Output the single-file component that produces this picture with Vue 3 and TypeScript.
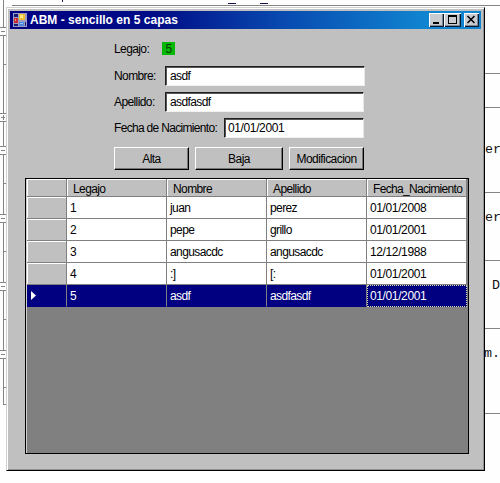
<script setup lang="ts">
import { ref } from 'vue'

interface Persona {
  legajo: number
  nombre: string
  apellido: string
  fecha: string
}

const personas: Persona[] = [
  { legajo: 1, nombre: 'juan', apellido: 'perez', fecha: '01/01/2008' },
  { legajo: 2, nombre: 'pepe', apellido: 'grillo', fecha: '01/01/2001' },
  { legajo: 3, nombre: 'angusacdc', apellido: 'angusacdc', fecha: '12/12/1988' },
  { legajo: 4, nombre: ':]', apellido: '[:', fecha: '01/01/2001' },
  { legajo: 5, nombre: 'asdf', apellido: 'asdfasdf', fecha: '01/01/2001' },
]
const selected = ref<Persona>(personas[4])

const ruleRows: number[] = [73, 107, 192, 260, 328, 413]
const foldRows: number[] = [27, 113, 146, 214, 282, 350]
const tickRows: number[] = [64, 183, 251, 319, 387, 404]
</script>

<template>
  <main class="desktop">
    <svg class="editor" width="500" height="483" viewBox="0 0 500 483" shape-rendering="crispEdges">
      <path d="M12 5.5H500" class="rule" />
      <path d="M62.5 0V2M228 3.5H236M260 3.5H268" class="mark" />
      <path v-for="y in ruleRows" :key="'r' + y" :d="`M484 ${y + 0.5}H500`" class="rule" />
      <path d="M3.5 0V27M3.5 35V113M3.5 121V146M3.5 154V214M3.5 222V282M3.5 290V350M3.5 358V404" class="rule" />
      <path v-for="y in foldRows" :key="'f' + y" :d="`M0 ${y + 0.5}H6M0 ${y + 8.5}H6M1 ${y + 4.5}H5`" class="rule" />
      <path d="M3.5 115V120" class="rule" />
      <path v-for="y in tickRows" :key="'t' + y" :d="`M3 ${y + 0.5}H6`" class="rule" />
      <text x="485" y="153">er</text>
      <text x="485" y="221">er</text>
      <text x="492" y="289">D</text>
      <text x="484" y="357">m.</text>
    </svg>

    <section class="window">
      <header class="titlebar">
        <svg class="app-icon" width="14" height="14" viewBox="0 0 14 14">
          <path d="M0 0H14V14H0Z" fill="#9a9dc0" />
          <path d="M1 1H5V4H1ZM1 11H5V13H1ZM12 9H13V13H12Z" fill="#181b78" />
          <path d="M1 5H5V10H1Z" fill="#c82832" /><path d="M2 6H3V8H2Z" fill="#ff9188" />
          <path d="M6 1H12V7H6Z" fill="#f2bd32" /><path d="M7 2H10V5H7Z" fill="#ffeb86" />
          <path d="M6 9H11V13H6Z" fill="#4e86dd" /><path d="M7 10H10V11H7Z" fill="#91c7ff" />
        </svg>
        <h1>ABM - sencillo en 5 capas</h1>
        <div class="controls">
          <button aria-label="Minimizar"><svg width="15" height="14" viewBox="0 0 15 14"><path d="M4 9H10V11H4Z" /></svg></button>
          <button class="maximize" aria-label="Maximizar"><svg width="16" height="14" viewBox="0 0 16 14"><path fill-rule="evenodd" d="M4 2H13V11H4ZM5 4V10H12V4Z" /></svg></button>
          <button class="close" aria-label="Cerrar"><svg width="15" height="14" viewBox="0 0 15 14"><path d="M3.5 3L10.5 10M10.5 3L3.5 10" fill="none" stroke="#000" stroke-width="1.6" /></svg></button>
        </div>
      </header>

      <form class="form" @submit.prevent>
        <div class="row legajo"><label>Legajo:</label><output>{{ selected.legajo }}</output></div>
        <div class="row nombre"><label>Nombre:</label><div class="field">{{ selected.nombre }}</div></div>
        <div class="row apellido"><label>Apellido:</label><div class="field">{{ selected.apellido }}</div></div>
        <div class="row fecha"><label>Fecha de Nacimiento:</label><div class="field date">{{ selected.fecha }}</div></div>
        <div class="actions">
          <button type="button">Alta</button>
          <button type="button">Baja</button>
          <button type="button">Modificacion</button>
        </div>
      </form>

      <div class="grid">
        <div class="record head">
          <span class="selector"></span><span>Legajo</span><span>Nombre</span><span>Apellido</span><span class="hdate">Fecha_Nacimiento</span>
        </div>
        <div v-for="p in personas" :key="p.legajo" class="record" :class="{ active: p.legajo === selected.legajo }">
          <span class="selector"><svg v-if="p.legajo === selected.legajo" width="5" height="9" viewBox="0 0 5 9"><path d="M0 0L5 4.5L0 9Z" fill="#fff" /></svg></span>
          <span>{{ p.legajo }}</span><span>{{ p.nombre }}</span><span>{{ p.apellido }}</span><span class="date">{{ p.fecha }}</span>
        </div>
      </div>
    </section>
  </main>
</template>

<style>
body { background: #fff; overflow: hidden; }
</style>

<style scoped>
* { box-sizing: border-box; }
.desktop {
  position: relative; width: 500px; height: 483px; padding: 7px 0 0 6px; background: #fefefe; overflow: hidden;
  font: 12px/14px "Liberation Sans", Arial, sans-serif; letter-spacing: -0.6px; color: #000;
}
.editor { position: absolute; left: 0; top: 0; letter-spacing: 0; }
.editor text { font: 13.3px "Liberation Mono", monospace; fill: #111; }
.rule { fill: none; stroke: #858585; }
.mark { fill: none; stroke: #111150; }
.window {
  position: relative; width: 479px; height: 464px; padding: 2px; background: #c0c0c0;
  border: 1px solid; border-color: #d0d0d0 #000 #000 #d0d0d0;
  box-shadow: inset 1px 1px #fff, inset -1px -1px #929292;
}
.titlebar {
  display: flex; align-items: center; height: 18px; margin: 1px 0 0 1px; width: 471px; padding: 0 2px 0 3px;
  background: linear-gradient(90deg, #000080 0%, #000d87 31%, #084ab0 58%, #1084d0 88%, #1084d0 100%);
}
.app-icon { flex: none; }
h1 { margin: 0 0 0 3px; color: #fff; font-size: 12px; line-height: 18px; font-weight: 700; letter-spacing: 0.02px; white-space: nowrap; }
.controls { display: flex; margin-left: auto; }
.controls button {
  display: block; width: 15px; height: 14px; padding: 0; border: 0; background: #c8cbd0;
  box-shadow: inset 1px 1px #fff, inset -1px -1px #0a1830, inset -2px -2px #7c8796;
}
.controls .maximize { width: 17px; }
.controls .close { margin-left: 3px; width: 15px; }
.controls svg { display: block; }
.form { display: flex; flex-direction: column; margin: 12px 0 0 105px; width: 252px; }
.row { display: flex; align-items: center; white-space: nowrap; }
.row label { flex: none; }
.legajo { height: 15px; }
.legajo label { width: 48px; }
output { width: 13px; height: 13px; background: #08b808; color: #073c07; text-align: center; line-height: 14px; }
.nombre { height: 20px; margin-top: 10px; }
.apellido { height: 20px; margin-top: 6px; }
.fecha { height: 20px; margin-top: 6px; }
.nombre label, .apellido label { width: 51px; }
.fecha label { width: 110px; letter-spacing: -0.68px; }
.field {
  width: 200px; height: 20px; padding: 2px 0 0 4px; background: #fff;
  border: 1px solid; border-color: #202020 #e8e8e8 #f2f2f2 #202020; box-shadow: inset 1px 1px #555;
  letter-spacing: -0.6px;
}
.apellido .field { width: 199px; }
.fecha .field { width: 140px; }
.field.date { padding-left: 3px; letter-spacing: -0.38px; }
.actions { display: grid; grid-template-columns: 75px 88px 75px; column-gap: 6px; margin-top: 9px; }
.actions button {
  height: 23px; padding: 1px 0 0; border: 1px solid; border-color: #fff #000 #000 #fff; background: #c0c0c0;
  box-shadow: inset -1px -1px #777; font: inherit; letter-spacing: -0.55px; color: #000;
}
.grid {
  width: 444px; height: 276px; margin: 8px 0 0 16px; padding-left: 1px;
  border: 1px solid #000; background: #808080; box-shadow: inset 1px 0 #cfcfcf;
}
.record { display: grid; grid-template-columns: 40px 100px 100px 100px 100px; height: 22px; background: #fff; width: 440px; }
.record span { padding: 4px 0 0 3px; border-right: 1px solid #808080; border-bottom: 1px solid #808080; white-space: nowrap; letter-spacing: -0.6px; }
.record .selector { padding: 0; background: #c0c0c0; box-shadow: inset 1px 1px #fff; }
.record .date { letter-spacing: -0.38px; }
.record.head { height: 18px; background: #c0c0c0; }
.record.head span { padding: 3px 0 0 6px; box-shadow: inset 1px 1px #fff; letter-spacing: -0.6px; }
.record.head .hdate { letter-spacing: -0.68px; }
.record.active, .record.active .selector { background: #000080; color: #fff; box-shadow: none; }
.record.active .selector { padding: 6px 0 0 4px; }
.record.active .selector svg { display: block; }
.record.active span { border-bottom-color: #000080; }
.record.active .date { border: 1px dotted #d8d8b0; padding: 3px 0 0 2px; }
</style>
